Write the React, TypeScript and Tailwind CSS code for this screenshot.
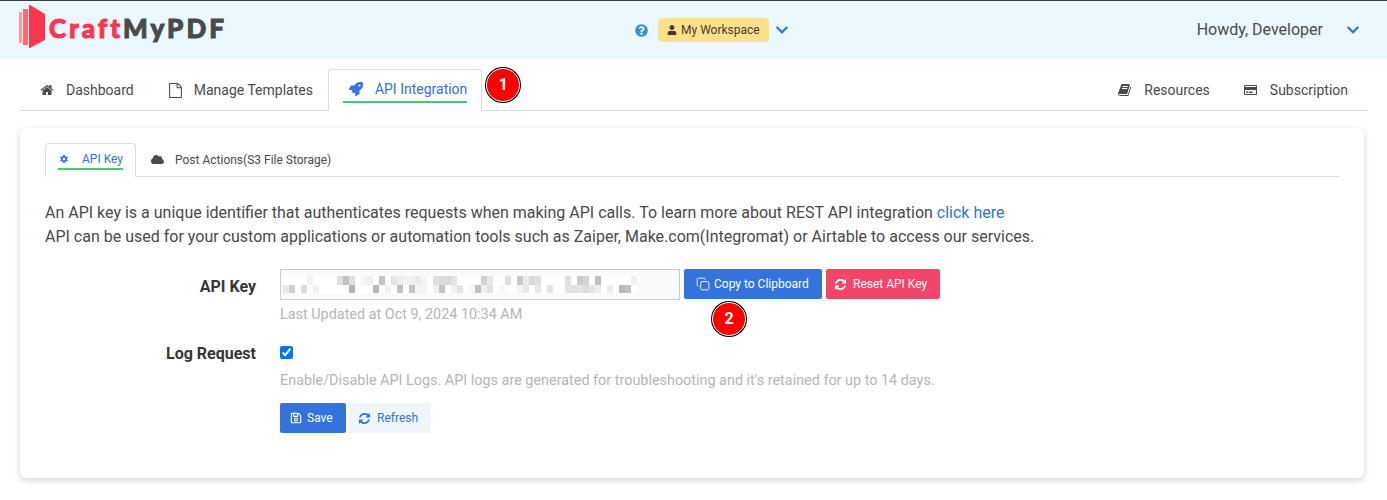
import { FaRegCreditCard, FaCog, FaCloud, FaRocket, FaRegSave, FaUser, FaQuestionCircle, FaChevronDown } from "react-icons/fa";
import { Copy } from "lucide-react";

const row1: [number, string][] = [[4,"f3f3f3"],[9,"e0e0e0"],[10,"bfbfbf"],[11,"e0e0e0"],[13,"f5f5f5"],[14,"f0f0f0"],[16,"c4c4c4"],[18,"e4e4e4"],[19,"ececec"],[20,"f0f0f0"],[21,"f0f0f0"],[22,"eaeaea"],[23,"f4f4f4"],[25,"e0e0e0"],[26,"dcdcdc"],[27,"dadada"],[28,"e4e4e4"],[33,"d0d0d0"],[34,"e8e8e8"],[37,"e0e0e0"],[39,"c8c8c8"],[40,"ececec"],[41,"d8d8d8"],[42,"e0e0e0"],[47,"e0e0e0"],[49,"cccccc"],[50,"d4d4d4"],[52,"c0c0c0"],[58,"f0f0f0"]];
const row2: [number, string][] = [[0,"e8e8e8"],[1,"d0d0d0"],[3,"dcdcdc"],[5,"f0f0f0"],[11,"b5b5b5"],[15,"b8b8b8"],[17,"f0f0f0"],[19,"c0c0c0"],[21,"c4c4c4"],[22,"f4f4f4"],[23,"f4f4f4"],[25,"f0f0f0"],[26,"c4c4c4"],[28,"f0f0f0"],[29,"e4e4e4"],[31,"f6f6f6"],[32,"c0c0c0"],[33,"f0f0f0"],[34,"e0e0e0"],[36,"f6f6f6"],[39,"f4f4f4"],[40,"e8e8e8"],[42,"e8e8e8"],[44,"e4e4e4"],[47,"e4e4e4"],[48,"e0e0e0"],[49,"e4e4e4"],[50,"dddddd"],[51,"e4e4e4"],[52,"eeeeee"],[54,"ececec"],[56,"b8b8b8"],[57,"c0c0c0"]];

function Fa4({ d, size }: { d: string; size: number }) {
  return (
    <svg width={size} height={size} viewBox="0 0 1792 1792" fill="currentColor" className="shrink-0">
      <path d={d} />
    </svg>
  );
}
const HOME = "M1472 992v480q0 26-19 45t-45 19h-384v-384h-256v384h-384q-26 0-45-19t-19-45v-480q0-1 .5-3t.5-3l575-474 575 474q1 2 1 6zm223-69l-62 74q-8 9-21 11h-3q-13 0-21-7l-692-577-692 577q-12 8-24 7-13-2-21-11l-62-74q-8-10-7-23.500t11-21.500l719-599q32-26 76-26t76 26l244 204v-195q0-14 9-23t23-9h192q14 0 23 9t9 23v408l219 182q10 8 11 21.500t-7 23.500z";
const FILE = "M1596 380q28 28 48 76t20 88v1152q0 40-28 68t-68 28h-1344q-40 0-68-28t-28-68v-1600q0-40 28-68t68-28h896q40 0 88 20t76 48zm-444-244v376h376q-10-29-22-41l-313-313q-12-12-41-22zm384 1528v-1024h-416q-40 0-68-28t-28-68v-416h-768v1536h1280z";
const BOOK = "M1639 478q40 57 18 129l-275 906q-19 64-76.500 107.500t-122.500 43.500h-923q-77 0-148.500-53.500t-99.500-131.500q-24-67-2-127 0-4 3-27t4-37q1-8-3-21.500t-3-19.500q2-11 8-21t16.500-23.500 16.500-23.500q23-38 45-91.500t30-91.500q3-10 .5-30t-.5-28q3-11 17-28t17-23q21-36 42-92t25-90q1-9-2.500-32t.5-28q4-13 22-30.500t22-22.500q19-26 42.500-84.500t27.500-96.500q1-8-3-25.500t-2-26.500q2-8 9-18t18-23 17-21q8-12 16.500-30.500t15-35 16-36 19.500-32 26.500-23.500 36-11.500 47.500 5.500l-1 3q38-9 51-9h761q74 0 114 56t18 130l-274 906q-36 119-71.500 153.500t-128.500 34.500h-869q-27 0-38 15-11 16-1 43 24 70 144 70h923q29 0 56-15.500t35-41.500l300-987q7-22 5-57 38 15 59 43zm-1064 2q-4 13 2 22.500t20 9.500h608q13 0 25.500-9.500t16.500-22.500l21-64q4-13-2-22.500t-20-9.500h-608q-13 0-25.500 9.500t-16.500 22.500zm-83 256q-4 13 2 22.500t20 9.500h608q13 0 25.500-9.500t16.500-22.500l21-64q4-13-2-22.500t-20-9.500h-608q-13 0-25.500 9.500t-16.500 22.500z";
const REFRESH = "M1639 1056q0 5-1 7-64 268-268 434.500t-478 166.500q-146 0-282.500-55t-243.500-157l-129 129q-19 19-45 19t-45-19-19-45v-448q0-26 19-45t45-19h448q26 0 45 19t19 45-19 45l-137 137q71 66 161 102t187 36q134 0 250-65t186-179q11-17 53-117 8-23 30-23h192q13 0 22.500 9.500t9.500 22.500zm25-800v448q0 26-19 45t-45 19h-448q-26 0-45-19t-19-45 19-45l138-138q-148-137-349-137-134 0-250 65t-186 179q-11 17-53 117-8 23-30 23h-199q-13 0-22.500-9.500t-9.500-22.500v-7q65-268 270-434.500t480-166.500q146 0 284 55.500t245 156.500l130-129q19-19 45-19t45 19 19 45z";

function KeyBlur() {
  return (
    <svg width="354" height="17" viewBox="0 0 354 17" className="block">
      <rect width="354" height="17" fill="#ffffff" />
      {row1.map(([i, c]) => (
        <rect key={"a" + i} x={i * 6} y={0} width="6" height="9" fill={"#" + c} />
      ))}
      {row2.map(([i, c]) => (
        <rect key={"b" + i} x={i * 6} y={9} width="6" height="8" fill={"#" + c} />
      ))}
    </svg>
  );
}

function Badge({ n }: { n: string }) {
  return (
    <div className="w-[34px] h-[34px] rounded-full bg-[#fe0000] border border-white flex items-center justify-center text-white font-bold text-[16px] shadow-[0_0_0_1px_#000]">
      {n}
    </div>
  );
}

function NavTab({ icon, label, className = "gap-[13px]" }: { icon: React.ReactNode; label: string; className?: string }) {
  return (
    <div className={"h-full flex items-center px-[18px] pt-[1px] text-[14px] text-[#4a4a4a] " + className}>
      <span className="w-[13px] flex justify-center">{icon}</span>
      <span>{label}</span>
    </div>
  );
}

export default function App() {
  return (
    <div className="w-[1387px] h-[500px] overflow-hidden bg-white font-['Roboto',sans-serif] text-[#4a4a4a]">
      <header className="h-[59px] bg-[#ecf8ff] border-t border-[#3f3f3f] flex items-center pl-[19px] pr-[27px]">
        <svg width="27" height="44" viewBox="0 0 27 44" className="shrink-0 mt-[-7px]">
          <rect x="0" y="7" width="3" height="31" fill="#ff9d94" />
          <rect x="4" y="4" width="5" height="36" fill="#ff6b72" />
          <path d="M10 0 L11 0 L26 9 L26 35 L11 43 L10 43 Z" fill="#fd3650" />
        </svg>
        <div className="ml-[3px] w-[176px] whitespace-nowrap text-[26px] font-black tracking-[3px] [-webkit-text-stroke:1px] font-['Lato',sans-serif] mt-[-5px] leading-none">
          <span className="text-[#fd3650]">Craft</span>
          <span className="text-[#4a4a4a]">MyPDF</span>
        </div>
        <div className="ml-[410px] flex items-center">
          <FaQuestionCircle className="text-[#3e8ed0] text-[13px]" />
          <div className="ml-[10px] h-[24px] bg-[#ffe08a] rounded-[4px] px-[9px] flex items-center gap-[4px] text-[12px] text-[#4a3a2e]">
            <FaUser className="text-[10px]" />
            <span>My Workspace</span>
          </div>
          <FaChevronDown className="ml-[6px] text-[#3273dc] text-[14px]" />
        </div>
        <div className="ml-auto flex items-center text-[16px] text-[#4a4a4a]">
          <span>Howdy, Developer</span>
          <FaChevronDown className="ml-[23px] text-[#3273dc] text-[14px]" />
        </div>
      </header>

      <div className="mx-5 mt-[10px] h-[42px] pl-[2px] flex items-stretch border-b border-[#dbdbdb]">
        <NavTab icon={<Fa4 d={HOME} size={14} />} label="Dashboard" />
        <NavTab icon={<Fa4 d={FILE} size={15} />} label="Manage Templates" className="gap-[12px] ml-[-1px]" />
        <div className="ml-[-3px] mb-[-1px] bg-white border border-[#dbdbdb] border-b-white rounded-t-[4px] px-[14px]">
          <div className="h-[33px] pt-[7px] flex items-center gap-[12px] text-[14px] text-[#3273dc] border-b-2 border-[#48c774] pl-[6px] whitespace-nowrap">
            <FaRocket className="text-[14px]" />
            <span>API Integration</span>
          </div>
        </div>
        <div className="ml-[4px] self-center mt-[-9px]"><Badge n="1" /></div>
        <div className="ml-auto mr-[1px] flex items-stretch">
          <NavTab icon={<Fa4 d={BOOK} size={14} />} label="Resources" />
          <NavTab icon={<FaRegCreditCard className="text-[16px]" />} label="Subscription" className="gap-[13px] ml-[-2px]" />
        </div>
      </div>

      <main className="mx-5 mt-[17px] w-[1344px] h-[350px] rounded-[6px] bg-white shadow-[0_2px_6px_rgba(10,10,10,0.18),0_0_1px_rgba(10,10,10,0.05)] px-[25px] pt-[15px]">
        <div className="h-[34px] flex items-stretch border-b border-[#dbdbdb] text-[12px]">
          <div className="mb-[-1px] bg-white border border-[#dbdbdb] border-b-white rounded-t-[4px] px-[12px]">
            <div className="h-[26px] pt-[5px] flex items-center gap-[14px] text-[#3273dc] border-b-2 border-[#48c774] w-[65px] pl-[2px] whitespace-nowrap">
              <FaCog className="text-[12px]" />
              <span>API Key</span>
            </div>
          </div>
          <div className="flex items-center gap-[11px] pl-[15px] text-[#4a4a4a]">
            <FaCloud className="text-[13px]" />
            <span>Post Actions(S3 File Storage)</span>
          </div>
        </div>

        <p className="mt-[24px] text-[16px] leading-[24px] text-[#4a4a4a]">
          An API key is a unique identifier that authenticates requests when making API calls. To learn more about REST API integration <span className="text-[#3273dc]">click here</span>
          <br />
          API can be used for your custom applications or automation tools such as Zaiper, Make.com(Integromat) or Airtable to access our services.
        </p>

        <div className="mt-[20px] flex">
          <div className="w-[211px] text-right text-[16px] font-bold text-[#363636] pt-[6px]">API Key</div>
          <div className="ml-[24px]">
            <div className="flex items-start gap-[4px] relative">
              <div className="w-[400px] h-[31px] border border-[#cccccc] bg-[#fafafa] pl-[2px] flex items-center">
                <KeyBlur />
              </div>
              <button className="h-[30px] w-[138px] bg-[#3273dc] rounded-[2px] text-white text-[12px] flex items-center pl-[12px] gap-[4px]">
                <Copy size={14} strokeWidth={1.5} />
                <span>Copy to Clipboard</span>
              </button>
              <button className="h-[30px] w-[114px] bg-[#f14668] rounded-[2px] text-white text-[12px] flex items-center pl-[8px] gap-[6px]">
                <Fa4 d={REFRESH} size={13} />
                <span>Reset API Key</span>
              </button>
              <div className="absolute left-[432px] top-[33px]"><Badge n="2" /></div>
            </div>
            <div className="mt-[4px] text-[14.4px] leading-[21px] text-[#b5b5b5]">Last Updated at Oct 9, 2024 10:34 AM</div>
          </div>
        </div>

        <div className="mt-[17px] flex">
          <div className="w-[211px] text-right text-[16px] font-bold text-[#363636] leading-[24px]">Log Request</div>
          <div className="ml-[24px]">
            <input type="checkbox" defaultChecked className="block w-[13px] h-[13px] mt-[4px] accent-[#0075ff]" />
            <div className="mt-[11px] text-[14.4px] leading-[21px] text-[#b5b5b5]">Enable/Disable API Logs. API logs are generated for troubleshooting and it's retained for up to 14 days.</div>
            <div className="mt-[12px] flex gap-[3px]">
              <button className="h-[30px] w-[66px] bg-[#3273dc] rounded-[2px] text-white text-[12px] flex items-center pl-[10px] gap-[5px]">
                <FaRegSave className="text-[12px]" />
                <span>Save</span>
              </button>
              <button className="h-[30px] w-[82px] bg-[#eff5fb] rounded-[2px] text-[#3273dc] text-[12px] flex items-center pl-[9px] gap-[6px]">
                <Fa4 d={REFRESH} size={13} />
                <span>Refresh</span>
              </button>
            </div>
          </div>
        </div>
      </main>
    </div>
  );
}
